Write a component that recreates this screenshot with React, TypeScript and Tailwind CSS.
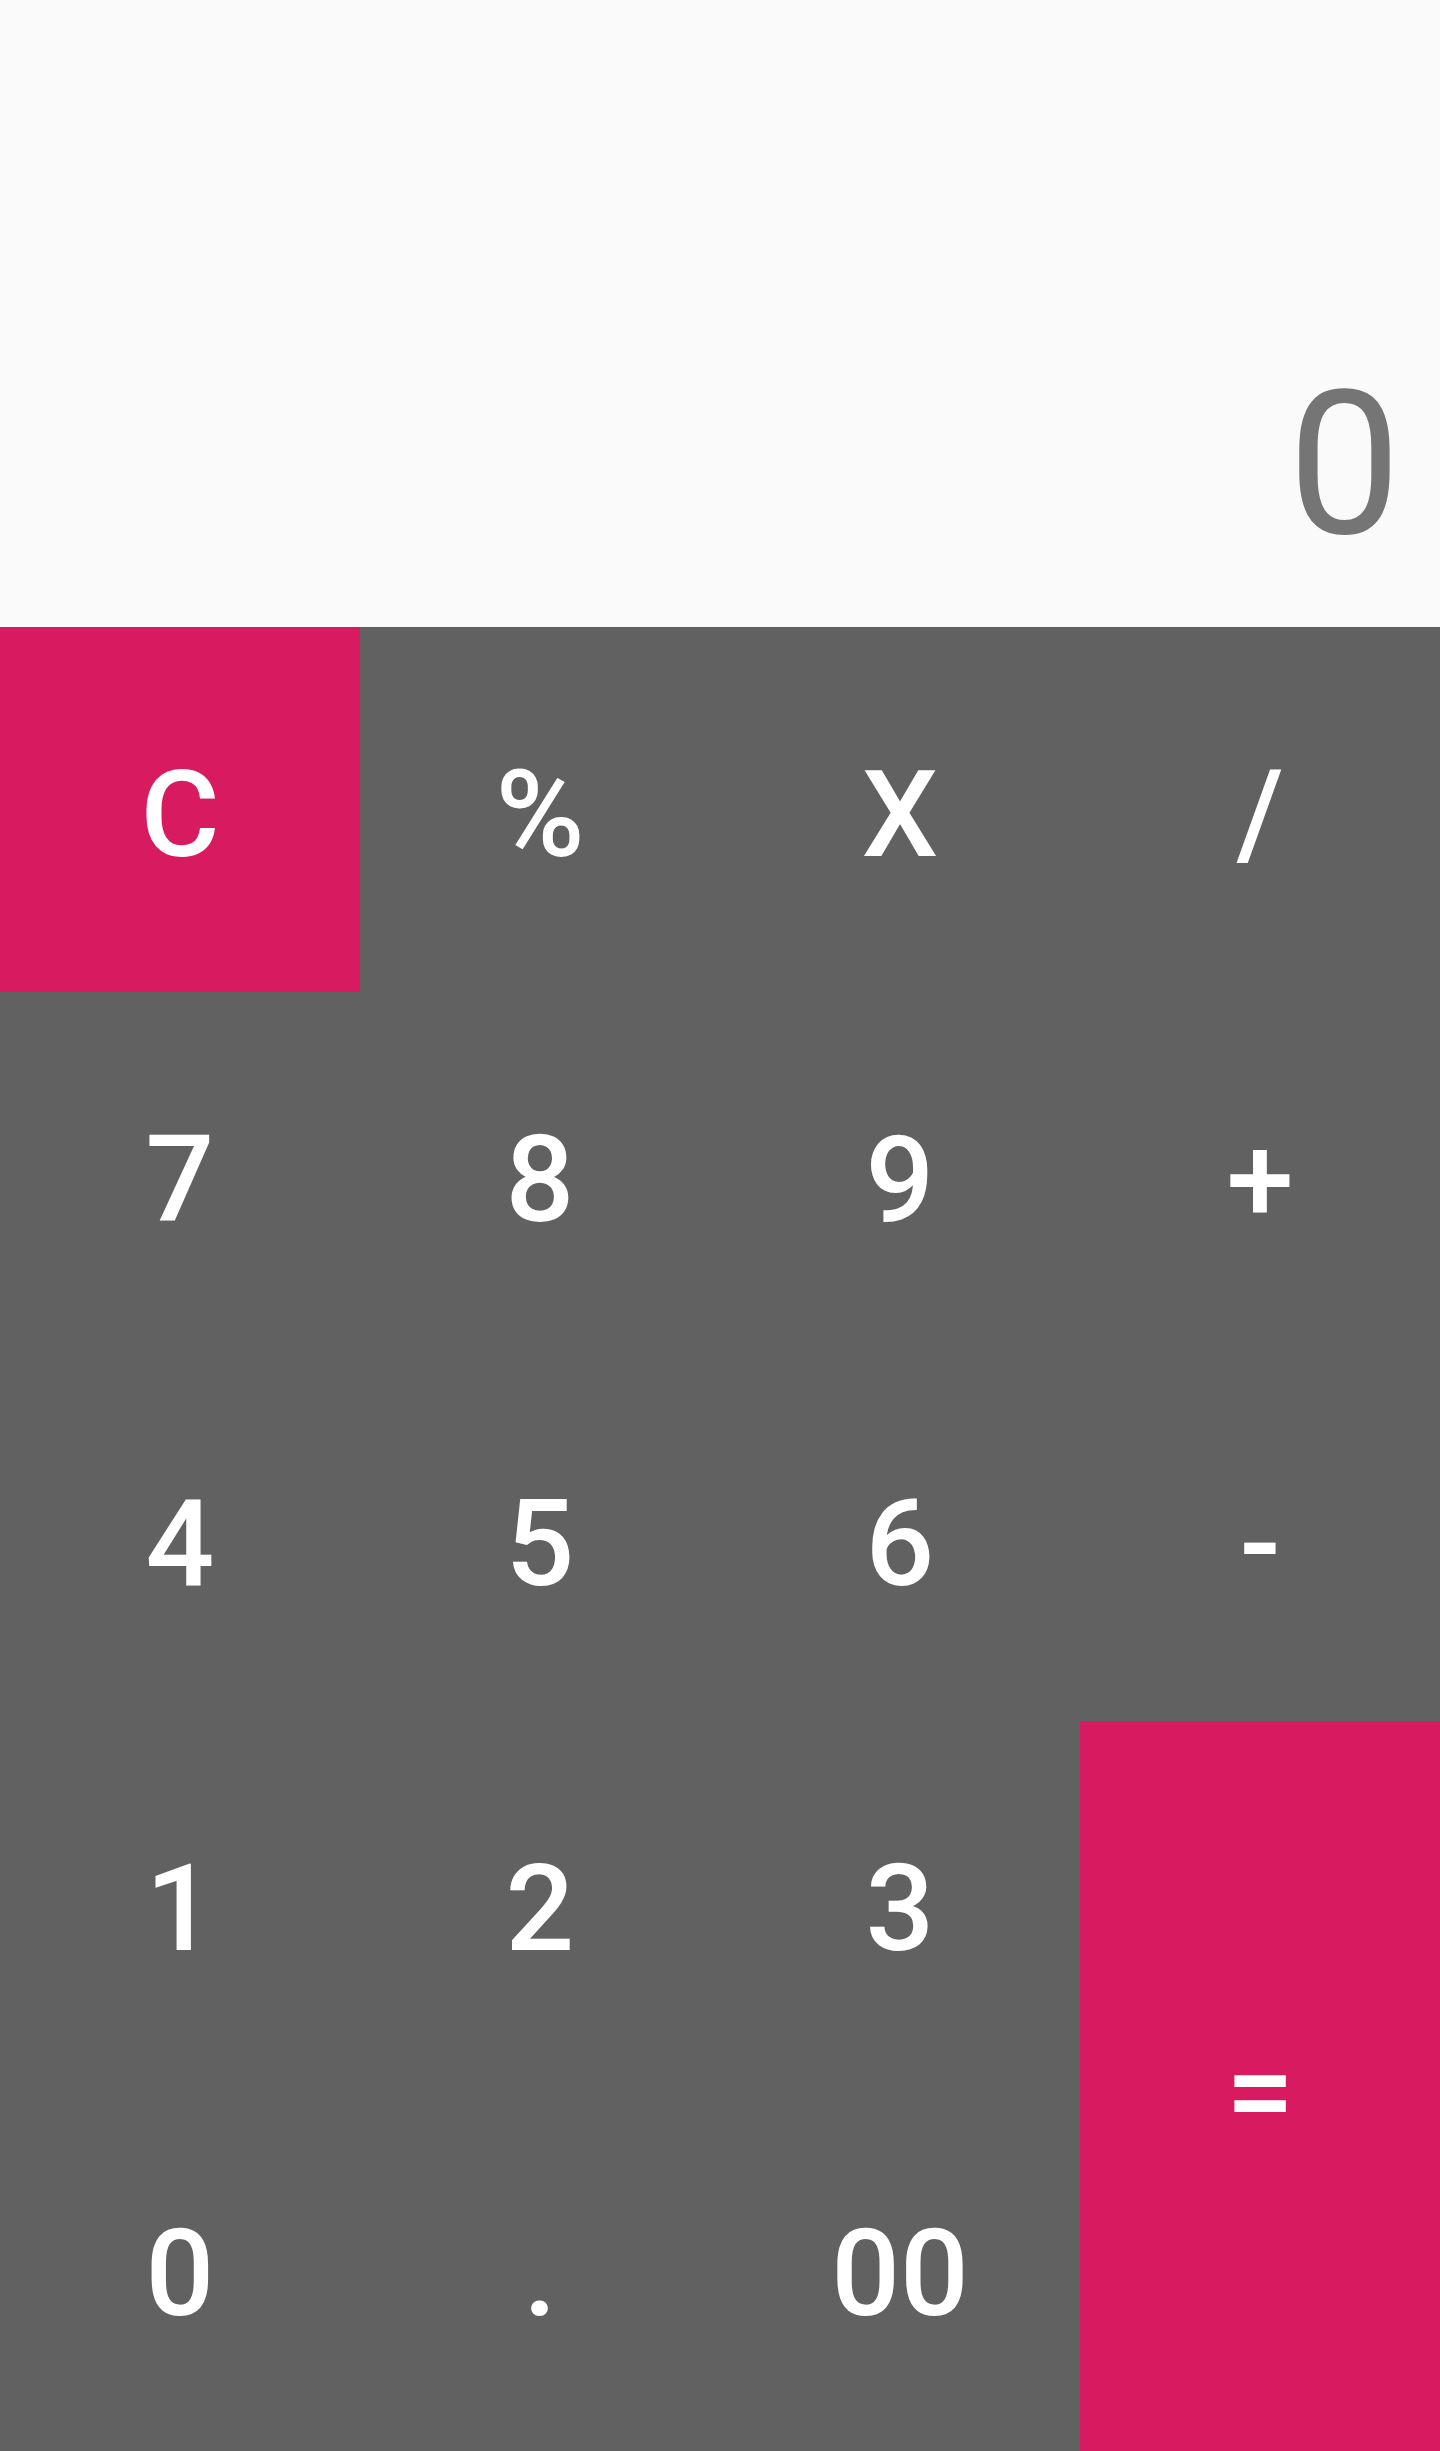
import { useState } from 'react'

type Key = { label: string; accent?: boolean; tall?: boolean }

const keys: Key[] = [
  { label: 'C', accent: true },
  { label: '%' },
  { label: 'X' },
  { label: '/' },
  { label: '7' },
  { label: '8' },
  { label: '9' },
  { label: '+' },
  { label: '4' },
  { label: '5' },
  { label: '6' },
  { label: '-' },
  { label: '1' },
  { label: '2' },
  { label: '3' },
  { label: '=', accent: true, tall: true },
  { label: '0' },
  { label: '.' },
  { label: '00' },
]

export default function App() {
  const [display] = useState('0')

  return (
    <div className="flex h-[2451px] w-full flex-col font-['Roboto',sans-serif]">
      {/* Display */}
      <div className="flex h-[627px] shrink-0 items-end justify-end bg-[#fafafa] pr-[39px] pb-[62px]">
        <span className="text-[201px] leading-none text-[#757575]">{display}</span>
      </div>

      {/* Keypad */}
      <div className="grid flex-1 grid-cols-4 grid-rows-5 bg-[#616161]">
        {keys.map((k) => (
          <button
            key={k.label}
            className={
              'flex items-center justify-center pt-[12px] text-[121px] leading-none font-medium text-white ' +
              (k.accent ? 'bg-[#d81b60] ' : '') +
              (k.tall ? 'row-span-2' : '')
            }
          >
            {k.label}
          </button>
        ))}
      </div>
    </div>
  )
}
